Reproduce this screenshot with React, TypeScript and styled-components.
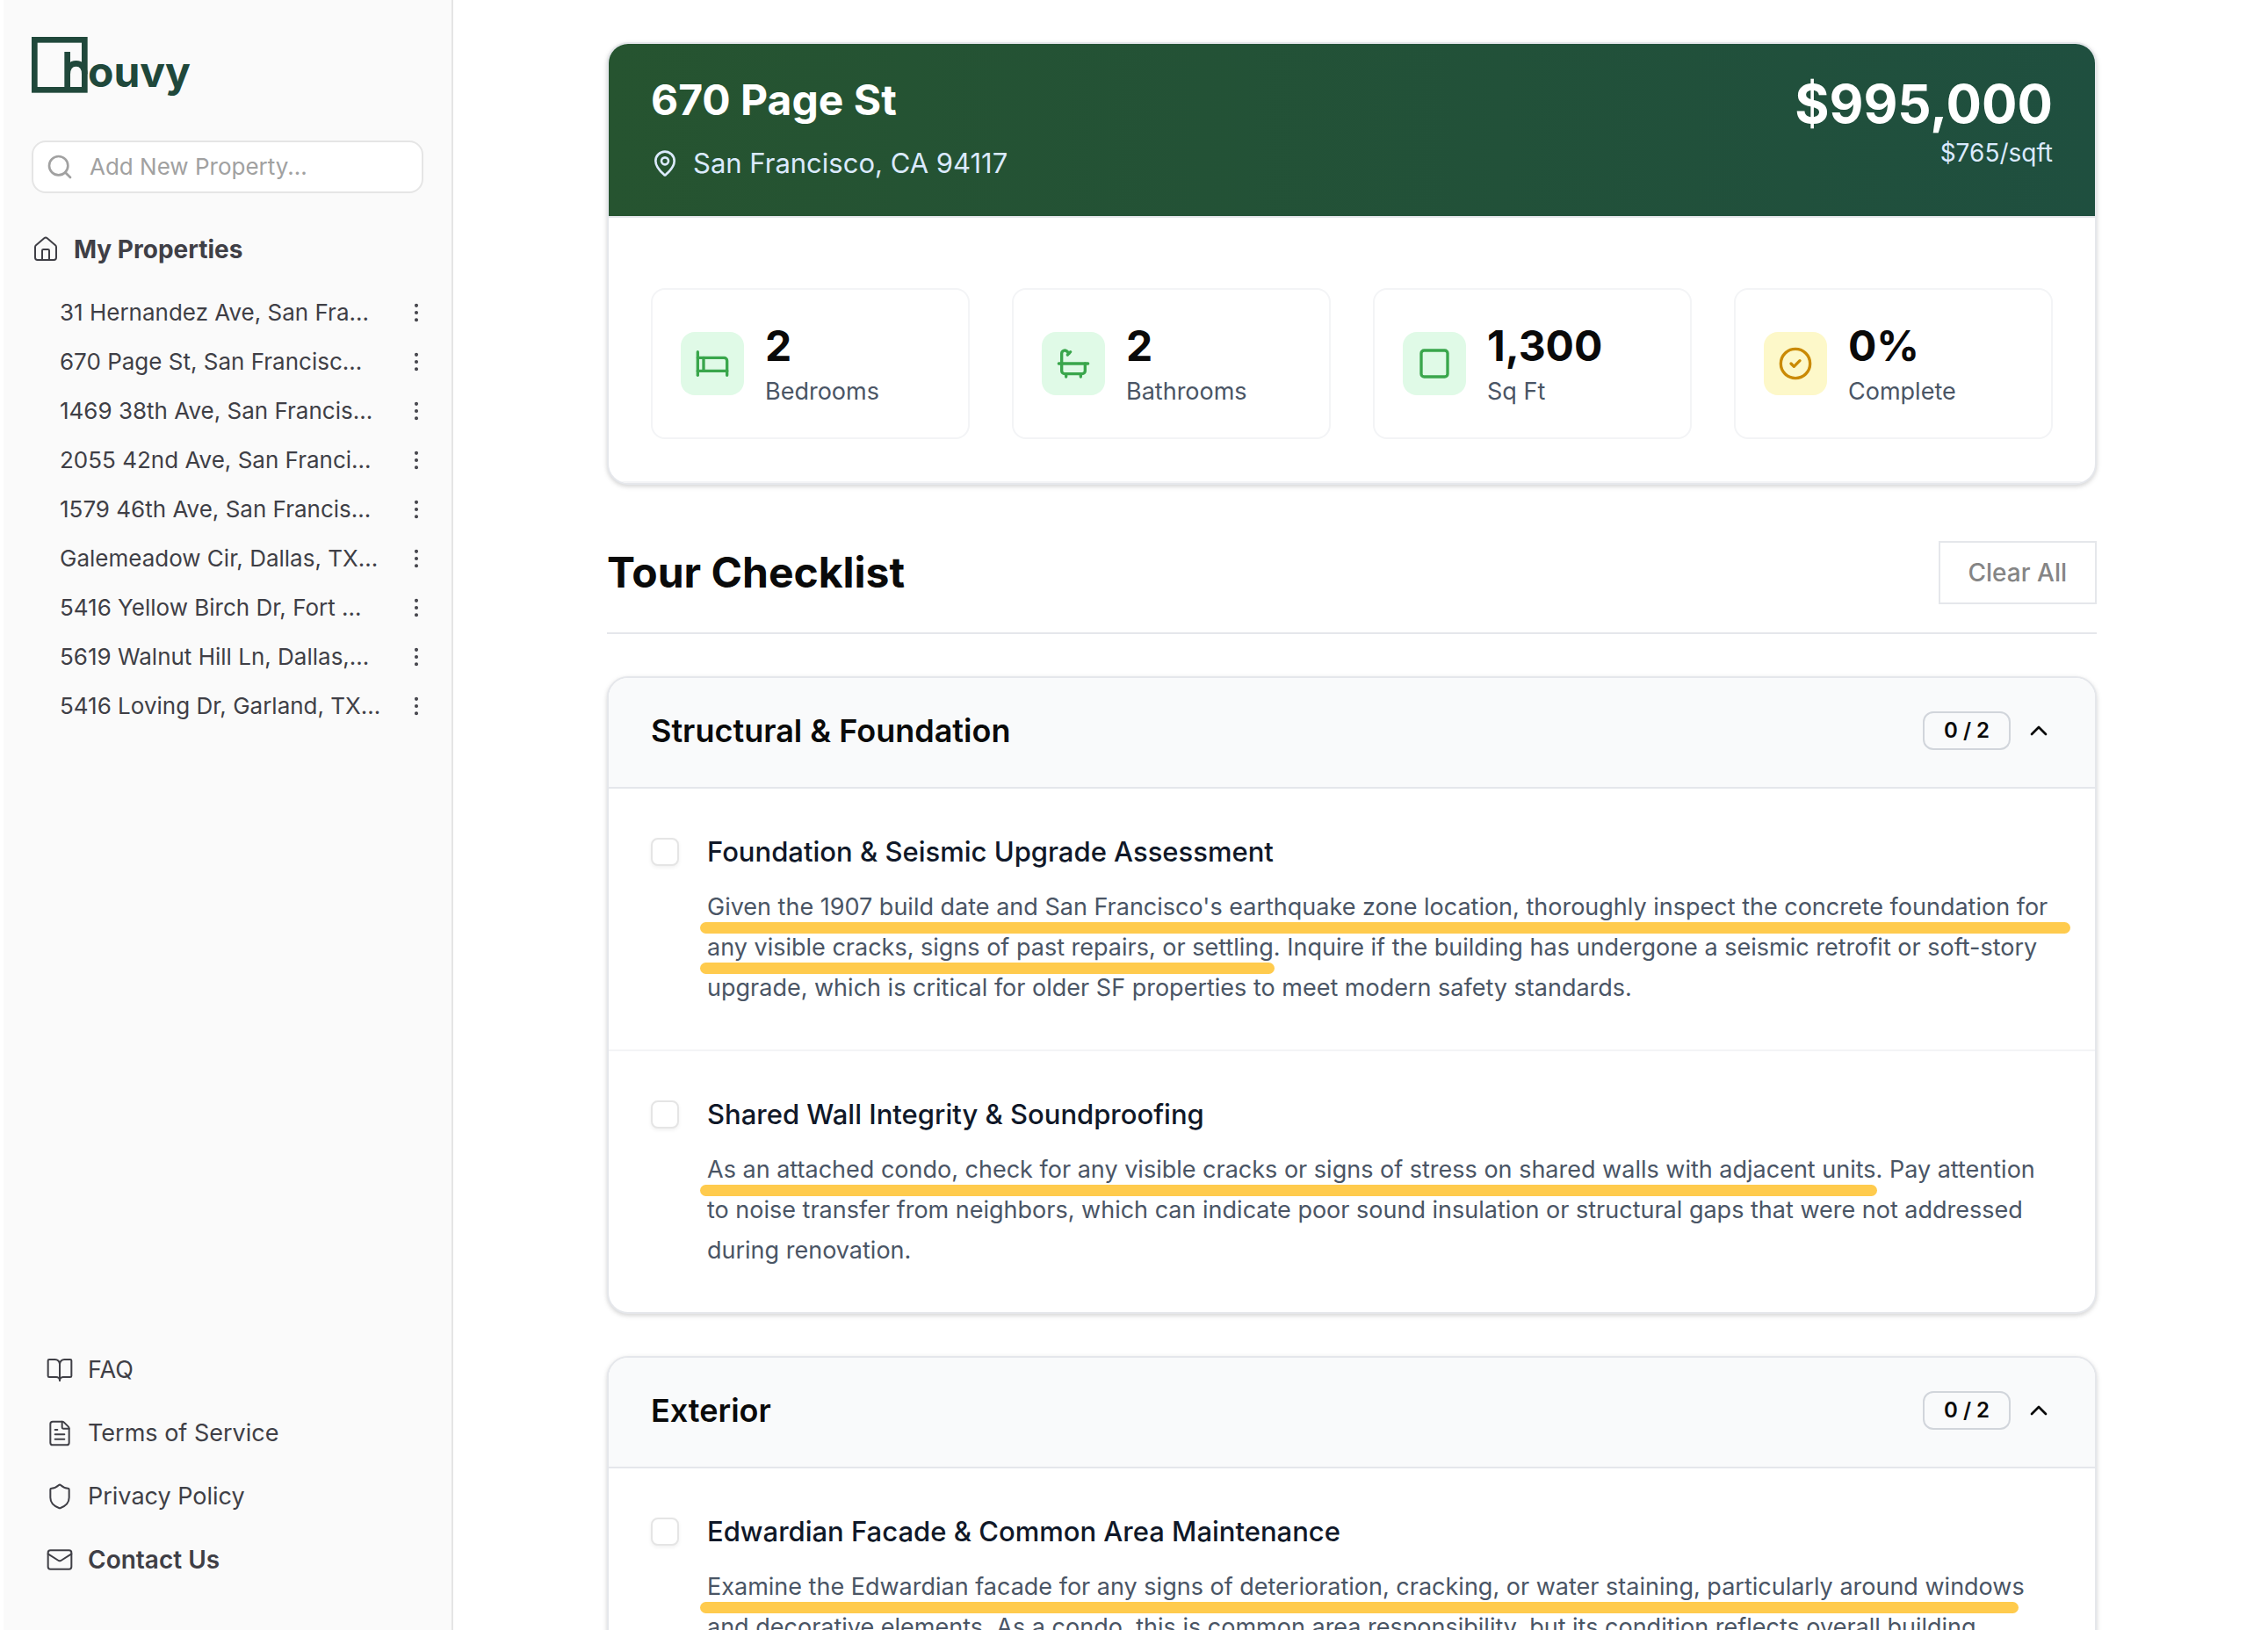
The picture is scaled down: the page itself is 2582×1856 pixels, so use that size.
import React, { useState } from 'react';
import styled, { createGlobalStyle } from 'styled-components';
import {
  Bath,
  Bed,
  BookOpen,
  ChevronUp,
  CircleCheck,
  EllipsisVertical,
  FileText,
  House,
  Mail,
  MapPin,
  Search,
  Shield,
  Square,
  type LucideIcon,
} from 'lucide-react';

const line = '#e5e7eb';
const faintLine = '#f3f4f6';

const GlobalStyle = createGlobalStyle`
  *, *::before, *::after { box-sizing: border-box; }
  body {
    margin: 0;
    background: #ffffff;
    color: #0a0a0a;
    font-family: Inter, "Liberation Sans", sans-serif;
    font-size: 27px;
    line-height: 40px;
    -webkit-font-smoothing: antialiased;
  }
  h1, h2, h3, p, ul { margin: 0; padding: 0; }
  ul { list-style: none; }
  a { color: inherit; text-decoration: none; }
  button, input { font: inherit; color: inherit; }
`;

const Shell = styled.div`
  display: grid;
  grid-template-columns: 512px minmax(0, 1fr);
  height: 100vh;
  padding-left: 4px;
`;

/* ---------- Sidebar ---------- */

const Sidebar = styled.aside`
  display: flex;
  flex-direction: column;
  padding: 42px 32px 52px;
  background: #fafafa;
  border-right: 2px solid #e5e5e5;
  color: #3f3f46;
`;

const Logo = styled.a`
  display: flex;
  align-items: center;
  height: 64px;
  color: #20483b;
`;

const LogoWord = styled.span`
  font-size: 48px;
  font-weight: 700;
  line-height: 64px;
  padding-top: 16px;
`;

const SearchBox = styled.label`
  display: flex;
  align-items: center;
  gap: 18px;
  height: 60px;
  margin-top: 54px;
  padding: 0 14px;
  border: 2px solid #e5e5e5;
  border-radius: 16px;
  background: #ffffff;
  color: #a1a1a1;
`;

const SearchInput = styled.input`
  flex: 1;
  min-width: 0;
  padding: 0;
  border: 0;
  outline: 0;
  background: transparent;
  color: #3f3f46;
  font-size: 26px;
  &::placeholder { color: #a1a1a1; opacity: 1; }
`;

const SidebarHeading = styled.h2`
  display: flex;
  align-items: center;
  gap: 16px;
  margin-top: 44px;
  font-size: 28px;
  font-weight: 700;
  line-height: 40px;
`;

const PropertyList = styled.ul`
  && { padding-left: 32px; }
  margin-top: 24px;
  font-size: 26px;
`;

const PropertyRow = styled.li`
  display: flex;
  align-items: center;
  justify-content: space-between;
  height: 56px;
  white-space: nowrap;
`;

const MenuButton = styled.button`
  display: flex;
  padding: 0;
  margin-right: -6px;
  border: 0;
  background: transparent;
  cursor: pointer;
`;

const FooterNav = styled.nav`
  display: flex;
  flex-direction: column;
  gap: 16px;
  margin-top: auto;
  padding-left: 16px;
`;

const FooterLink = styled.a<{ $strong?: boolean }>`
  display: flex;
  align-items: center;
  gap: 16px;
  height: 56px;
  font-size: ${(p) => (p.$strong ? 28 : 27)}px;
  font-weight: ${(p) => (p.$strong ? 600 : 400)};
`;

/* ---------- Main column ---------- */

const Main = styled.main`
  overflow-y: auto;
  scrollbar-width: none;
  padding: 48px 68px 48px 48px;
`;

const Column = styled.div`
  max-width: 1696px;
  margin: 0 auto;
`;

const Card = styled.section`
  overflow: hidden;
  border: 2px solid ${line};
  border-radius: 24px;
  background: #ffffff;
  box-shadow: 0 2px 6px rgba(0, 0, 0, 0.1), 0 2px 4px rgba(0, 0, 0, 0.08);
`;

const Hero = styled.header`
  display: flex;
  justify-content: space-between;
  padding: 32px 48px 36px;
  border-bottom: 2px solid ${line};
  background: linear-gradient(90deg, #265430, #1f4f3f);
  background-clip: padding-box;
  color: #ffffff;
`;

const HeroTitle = styled.h1`
  font-size: 48px;
  font-weight: 700;
  line-height: 64px;
`;

const Address = styled.p`
  display: flex;
  align-items: center;
  gap: 16px;
  margin-top: 16px;
  color: #dbeafe;
  font-size: 31px;
  line-height: 48px;
`;

const PriceBlock = styled.div`
  text-align: right;
`;

const Price = styled.p`
  font-size: 60px;
  font-weight: 700;
  line-height: 72px;
`;

const UnitPrice = styled.p`
  color: #dbeafe;
  font-size: 28px;
`;

const Stats = styled.ul`
  display: grid;
  grid-template-columns: repeat(4, minmax(0, 1fr));
  gap: 48px;
  && { padding: 80px 48px 48px; }
  border-bottom: 2px solid ${faintLine};
`;

const Stat = styled.li`
  display: flex;
  align-items: center;
  gap: 24px;
  padding: 32px;
  border: 2px solid ${faintLine};
  border-radius: 16px;
`;

const StatIcon = styled.span<{ $tone: 'green' | 'yellow' }>`
  display: flex;
  align-items: center;
  justify-content: center;
  width: 72px;
  height: 72px;
  border-radius: 16px;
  color: ${(p) => (p.$tone === 'green' ? '#3aa64c' : '#ca8a04')};
  background: ${(p) => (p.$tone === 'green' ? '#e0fae7' : '#fdf8c9')};
`;

const StatValue = styled.p`
  font-size: 48px;
  font-weight: 700;
  line-height: 64px;
`;

const StatLabel = styled.p`
  color: #4a5565;
`;

const ListHeader = styled.div`
  display: flex;
  align-items: center;
  justify-content: space-between;
  margin-top: 64px;
  padding-bottom: 32px;
  border-bottom: 2px solid ${line};
`;

const ListTitle = styled.h2`
  font-size: 48px;
  font-weight: 700;
  line-height: 64px;
`;

const ClearButton = styled.button`
  height: 72px;
  padding: 0 32px;
  border: 2px solid ${line};
  background: #ffffff;
  color: #858585;
  font-size: 28px;
  font-weight: 500;
  cursor: pointer;
`;

const Section = styled(Card)`
  margin-top: 48px;
`;

const SectionHeader = styled.header`
  display: flex;
  align-items: center;
  justify-content: space-between;
  padding: 32px 48px 36px;
  border-bottom: 2px solid ${line};
  background: #f9fafb;
`;

const SectionTitle = styled.h3`
  font-size: 36px;
  font-weight: 600;
  line-height: 56px;
`;

const SectionToggle = styled.button`
  display: flex;
  align-items: center;
  gap: 16px;
  padding: 0;
  border: 0;
  background: transparent;
  cursor: pointer;
`;

const Count = styled.span`
  min-width: 100px;
  padding: 4px 16px;
  border: 2px solid #d1d5db;
  border-radius: 12px;
  font-size: 24px;
  font-weight: 600;
  line-height: 32px;
  text-align: center;
`;

const Task = styled.div`
  display: grid;
  grid-template-columns: 32px minmax(0, 1fr);
  column-gap: 32px;
  align-items: start;
  padding: 48px 48px 47px;
  & + & { border-top: 2px solid ${faintLine}; }
`;

const Check = styled.input`
  appearance: none;
  width: 32px;
  height: 32px;
  margin: 8px 0;
  border: 2px solid #e5e5e5;
  border-radius: 8px;
  background: #ffffff;
  box-shadow: 0 2px 4px rgba(0, 0, 0, 0.06);
  &:checked { background: #265430; border-color: #265430; }
`;

const TaskTitle = styled.label`
  display: block;
  color: #101828;
  font-size: 31px;
  font-weight: 500;
  line-height: 48px;
`;

const TaskText = styled.p`
  position: relative;
  margin-top: 16px;
  color: #4a5565;
  line-height: 46px;
`;

const Marker = styled.span<{ $line: number; $width: number }>`
  position: absolute;
  left: -8px;
  top: ${(p) => p.$line * 46 + 40}px;
  width: ${(p) => p.$width}px;
  height: 13px;
  border-radius: 7px;
  background: #ffcb4d;
`;

const properties = [
  '31 Hernandez Ave, San Fra...',
  '670 Page St, San Francisc...',
  '1469 38th Ave, San Francis...',
  '2055 42nd Ave, San Franci...',
  '1579 46th Ave, San Francis...',
  'Galemeadow Cir, Dallas, TX...',
  '5416 Yellow Birch Dr, Fort ...',
  '5619 Walnut Hill Ln, Dallas,...',
  '5416 Loving Dr, Garland, TX...',
];

const footerLinks: { icon: LucideIcon; label: string; strong?: boolean }[] = [
  { icon: BookOpen, label: 'FAQ' },
  { icon: FileText, label: 'Terms of Service' },
  { icon: Shield, label: 'Privacy Policy' },
  { icon: Mail, label: 'Contact Us', strong: true },
];

const stats: { icon: LucideIcon; value: string; label: string; tone: 'green' | 'yellow' }[] = [
  { icon: Bed, value: '2', label: 'Bedrooms', tone: 'green' },
  { icon: Bath, value: '2', label: 'Bathrooms', tone: 'green' },
  { icon: Square, value: '1,300', label: 'Sq Ft', tone: 'green' },
  { icon: CircleCheck, value: '0%', label: 'Complete', tone: 'yellow' },
];

type TaskData = { id: string; title: string; text: string; markers: number[] };

const sections: { title: string; total: number; tasks: TaskData[] }[] = [
  {
    title: 'Structural & Foundation',
    total: 2,
    tasks: [
      {
        id: 'foundation',
        title: 'Foundation & Seismic Upgrade Assessment',
        text: "Given the 1907 build date and San Francisco's earthquake zone location, thoroughly inspect the concrete foundation for any visible cracks, signs of past repairs, or settling. Inquire if the building has undergone a seismic retrofit or soft-story upgrade, which is critical for older SF properties to meet modern safety standards.",
        markers: [1560, 654],
      },
      {
        id: 'shared-wall',
        title: 'Shared Wall Integrity & Soundproofing',
        text: 'As an attached condo, check for any visible cracks or signs of stress on shared walls with adjacent units. Pay attention to noise transfer from neighbors, which can indicate poor sound insulation or structural gaps that were not addressed during renovation.',
        markers: [1340],
      },
    ],
  },
  {
    title: 'Exterior',
    total: 2,
    tasks: [
      {
        id: 'facade',
        title: 'Edwardian Facade & Common Area Maintenance',
        text: 'Examine the Edwardian facade for any signs of deterioration, cracking, or water staining, particularly around windows and decorative elements. As a condo, this is common area responsibility, but its condition reflects overall building',
        markers: [1501],
      },
    ],
  },
];

function LogoMark() {
  return (
    <svg width="64" height="64" viewBox="0 0 192 192" fill="none" stroke="currentColor" strokeWidth="20" aria-hidden="true">
      <rect x="10" y="10" width="171" height="171" />
      <path d="M122 51v130M122 128c0-24 13-37 30-37s29 12 29 36" />
    </svg>
  );
}

export default function App() {
  const [done, setDone] = useState<Record<string, boolean>>({});

  return (
    <>
      <GlobalStyle />
      <Shell>
        <Sidebar>
          <Logo href="#">
            <LogoMark />
            <LogoWord>ouvy</LogoWord>
          </Logo>
          <SearchBox>
            <Search size={32} aria-hidden="true" />
            <SearchInput type="text" aria-label="Add New Property" placeholder="Add New Property..." />
          </SearchBox>
          <SidebarHeading>
            <House size={32} strokeWidth={1.5} />
            My Properties
          </SidebarHeading>
          <PropertyList>
            {properties.map((name) => (
              <PropertyRow key={name}>
                <a href="#">{name}</a>
                <MenuButton aria-label="Property menu">
                  <EllipsisVertical size={28} strokeWidth={1.5} />
                </MenuButton>
              </PropertyRow>
            ))}
          </PropertyList>
          <FooterNav>
            {footerLinks.map(({ icon: Icon, label, strong }) => (
              <FooterLink key={label} href="#" $strong={strong}>
                <Icon size={32} strokeWidth={1.5} />
                {label}
              </FooterLink>
            ))}
          </FooterNav>
        </Sidebar>

        <Main>
          <Column>
            <Card>
              <Hero>
                <div>
                  <HeroTitle>670 Page St</HeroTitle>
                  <Address>
                    <MapPin size={32} />
                    San Francisco, CA 94117
                  </Address>
                </div>
                <PriceBlock>
                  <Price>$995,000</Price>
                  <UnitPrice>$765/sqft</UnitPrice>
                </PriceBlock>
              </Hero>
              <Stats>
                {stats.map(({ icon: Icon, value, label, tone }) => (
                  <Stat key={label}>
                    <StatIcon $tone={tone}>
                      <Icon size={40} />
                    </StatIcon>
                    <div>
                      <StatValue>{value}</StatValue>
                      <StatLabel>{label}</StatLabel>
                    </div>
                  </Stat>
                ))}
              </Stats>
            </Card>

            <ListHeader>
              <ListTitle>Tour Checklist</ListTitle>
              <ClearButton onClick={() => setDone({})}>Clear All</ClearButton>
            </ListHeader>

            {sections.map((section) => (
              <Section key={section.title}>
                <SectionHeader>
                  <SectionTitle>{section.title}</SectionTitle>
                  <SectionToggle aria-label={`Toggle ${section.title}`}>
                    <Count>
                      {`${section.tasks.filter((t) => done[t.id]).length} / ${section.total}`}
                    </Count>
                    <ChevronUp size={32} />
                  </SectionToggle>
                </SectionHeader>
                {section.tasks.map((task) => (
                  <Task key={task.id}>
                    <Check
                      type="checkbox"
                      id={task.id}
                      checked={!!done[task.id]}
                      onChange={(e) => setDone({ ...done, [task.id]: e.target.checked })}
                    />
                    <div>
                      <TaskTitle htmlFor={task.id}>{task.title}</TaskTitle>
                      <TaskText>
                        {task.text}
                        {task.markers.map((width, i) => (
                          <Marker key={i} $line={i} $width={width} />
                        ))}
                      </TaskText>
                    </div>
                  </Task>
                ))}
              </Section>
            ))}
          </Column>
        </Main>
      </Shell>
    </>
  );
}
